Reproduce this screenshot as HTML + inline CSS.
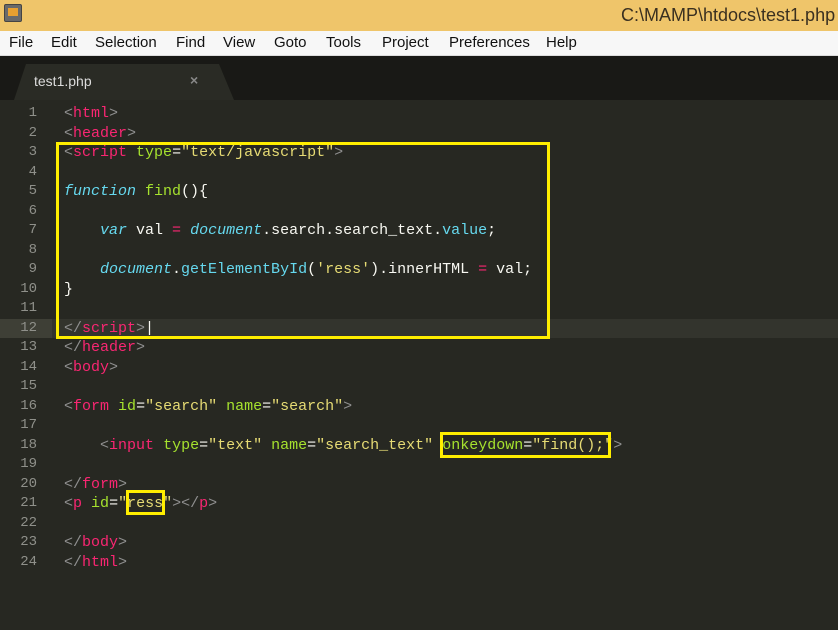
<!DOCTYPE html>
<html><head><meta charset="utf-8"><style>
*{margin:0;padding:0;box-sizing:border-box}
body{width:838px;height:630px;overflow:hidden;background:#272822;position:relative;font-family:"Liberation Sans",sans-serif}
#title{position:absolute;left:0;top:0;width:838px;height:31px;background:#efc56a}
#title .tt{position:absolute;left:621px;top:5px;font-size:18px;color:#3a3020;white-space:nowrap}
#icon{position:absolute;left:4px;top:4px;width:18px;height:18px;background:#6a6a6a;border:1px solid #444;border-radius:2px}
#icon:after{content:"";position:absolute;left:3px;top:3px;width:10px;height:8px;background:#e8a030}
#menu{position:absolute;left:0;top:31px;width:838px;height:25px;background:#f7f7f7;border-bottom:1px solid #ddd}
#menu span{position:absolute;top:3px;font-size:15px;color:#111}
#tabbar{position:absolute;left:0;top:56px;width:838px;height:44px;background:#191916}
#tab{position:absolute;left:14px;top:64px;width:220px;height:36px;background:#2a2b25;clip-path:polygon(0 100%,12px 0,205px 0,220px 100%)}
#tab .n{position:absolute;left:20px;top:9px;color:#ddd;font-size:14px}
#tab .x{position:absolute;left:176px;top:8px;color:#888;font-size:14px;font-weight:bold}
#code{position:absolute;left:0;top:104px;width:838px;font-family:"Liberation Mono",monospace;font-size:15px;line-height:19.52px;color:#f8f8f2}
.l{position:relative;height:19.52px}
.l .g{position:absolute;left:0;width:37px;text-align:right;color:#8f908a;font-size:14px}
.l .c{position:absolute;left:64px;white-space:pre}
.hl{background:#33342d}
.hl .g{background:#3e3f36;width:52px;padding-right:15px}
.t{color:#f92672}.a{color:#a6e22e}.s{color:#e6db74}.p{color:#8f8f8f}.k{color:#66d9ef;font-style:italic}.f{color:#a6e22e}.o{color:#f92672}.v{color:#66d9ef}
.box{position:absolute;border:3px solid #ffee00}
</style></head><body>
<div id="title"><div id="icon"></div><span class="tt">C:\MAMP\htdocs\test1.php</span></div>
<div id="menu">
<span style="left:9px">File</span><span style="left:51px">Edit</span><span style="left:95px">Selection</span><span style="left:176px">Find</span><span style="left:223px">View</span><span style="left:274px">Goto</span><span style="left:326px">Tools</span><span style="left:382px">Project</span><span style="left:449px">Preferences</span><span style="left:546px">Help</span>
</div>
<div id="tabbar"></div>
<div id="tab"><span class="n">test1.php</span><span class="x">×</span></div>
<div id="code"><div class="l"><span class="g">1</span><span class="c"><span class="p">&lt;</span><span class="t">html</span><span class="p">&gt;</span></span></div><div class="l"><span class="g">2</span><span class="c"><span class="p">&lt;</span><span class="t">header</span><span class="p">&gt;</span></span></div><div class="l"><span class="g">3</span><span class="c"><span class="p">&lt;</span><span class="t">script</span> <span class="a">type</span>=<span class="s">"text/javascript"</span><span class="p">&gt;</span></span></div><div class="l"><span class="g">4</span></div><div class="l"><span class="g">5</span><span class="c"><span class="k">function</span> <span class="f">find</span>(){</span></div><div class="l"><span class="g">6</span></div><div class="l"><span class="g">7</span><span class="c">    <span class="k">var</span> val <span class="o">=</span> <span class="k">document</span>.search.search_text.<span class="v">value</span>;</span></div><div class="l"><span class="g">8</span></div><div class="l"><span class="g">9</span><span class="c">    <span class="k">document</span>.<span class="v">getElementById</span>(<span class="s">'ress'</span>).innerHTML <span class="o">=</span> val;</span></div><div class="l"><span class="g">10</span><span class="c">}</span></div><div class="l"><span class="g">11</span></div><div class="l hl"><span class="g">12</span><span class="c"><span class="p">&lt;/</span><span class="t">script</span><span class="p">&gt;</span>|</span></div><div class="l"><span class="g">13</span><span class="c"><span class="p">&lt;/</span><span class="t">header</span><span class="p">&gt;</span></span></div><div class="l"><span class="g">14</span><span class="c"><span class="p">&lt;</span><span class="t">body</span><span class="p">&gt;</span></span></div><div class="l"><span class="g">15</span></div><div class="l"><span class="g">16</span><span class="c"><span class="p">&lt;</span><span class="t">form</span> <span class="a">id</span>=<span class="s">"search"</span> <span class="a">name</span>=<span class="s">"search"</span><span class="p">&gt;</span></span></div><div class="l"><span class="g">17</span></div><div class="l"><span class="g">18</span><span class="c">    <span class="p">&lt;</span><span class="t">input</span> <span class="a">type</span>=<span class="s">"text"</span> <span class="a">name</span>=<span class="s">"search_text"</span> <span class="a">onkeydown</span>=<span class="s">"find();"</span><span class="p">&gt;</span></span></div><div class="l"><span class="g">19</span></div><div class="l"><span class="g">20</span><span class="c"><span class="p">&lt;/</span><span class="t">form</span><span class="p">&gt;</span></span></div><div class="l"><span class="g">21</span><span class="c"><span class="p">&lt;</span><span class="t">p</span> <span class="a">id</span>=<span class="s">"ress"</span><span class="p">&gt;&lt;/</span><span class="t">p</span><span class="p">&gt;</span></span></div><div class="l"><span class="g">22</span></div><div class="l"><span class="g">23</span><span class="c"><span class="p">&lt;/</span><span class="t">body</span><span class="p">&gt;</span></span></div><div class="l"><span class="g">24</span><span class="c"><span class="p">&lt;/</span><span class="t">html</span><span class="p">&gt;</span></span></div></div>
<div class="box" style="left:56px;top:142px;width:494px;height:197px"></div>
<div class="box" style="left:440px;top:432px;width:171px;height:26px"></div>
<div class="box" style="left:126px;top:490px;width:39px;height:25px"></div>
</body></html>
